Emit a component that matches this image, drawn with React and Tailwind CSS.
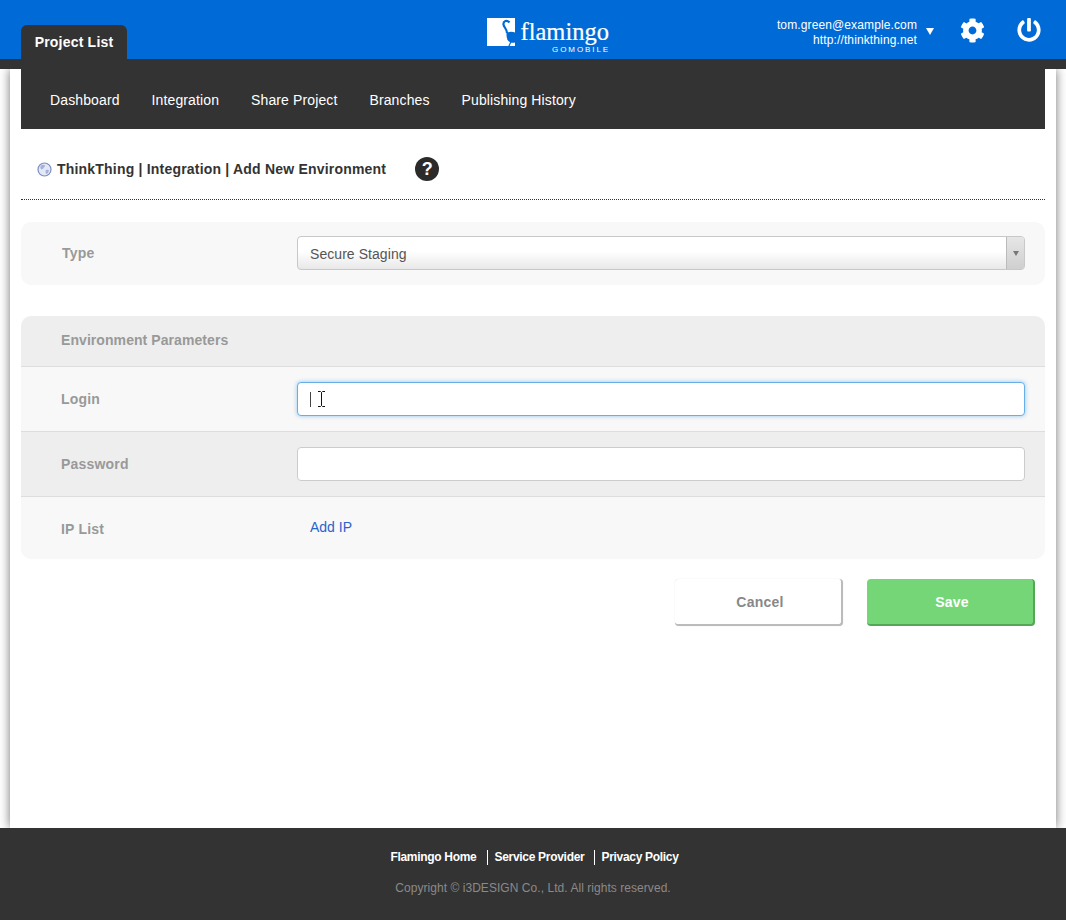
import React from "react";
import { FaCog, FaPowerOff } from "react-icons/fa";

const nav = ["Dashboard", "Integration", "Share Project", "Branches", "Publishing History"];

function Logo() {
  return (
    <div className="flex items-start h-[36px] mt-[18px] w-[122px] shrink-0 relative">
      <svg width="29" height="29" viewBox="0 0 29 29" className="shrink-0">
        <rect width="28" height="28" fill="#fff" />
        <path d="M22.500 4.500C20 1.500 16 3 16.500 6.500c.4 2.800 3.500 4.500 3.500 8.500" fill="none" stroke="#006bd6" strokeWidth="2.200" />
        <path d="M19.500 15c3-2 6.500-1.500 9.500 0v9c-3 1.500-6 1-8-1.500-1.300-2-1.600-5-1.500-7.500z" fill="#006bd6" />
        <path d="M24 23.500L21.500 29" fill="none" stroke="#006bd6" strokeWidth="1.200" />
      </svg>
      <div className="ml-[5px] w-[88px] flex flex-col items-end">
        <span className="font-[Liberation_Serif,serif] text-[24.5px] leading-[20px] text-white mt-[4px] [-webkit-text-stroke:0.2px_white]">flamingo</span>
        <span className="text-[8px] leading-[8px] tracking-[1.9px] text-white mt-[4px] mr-[-1px] whitespace-nowrap">GOMOBILE</span>
      </div>
    </div>
  );
}

function Globe() {
  return (
    <svg width="15" height="15" viewBox="0 0 15 15" className="shrink-0">
      <circle cx="7.500" cy="7.500" r="6.500" fill="#e3e8f6" stroke="#7d8dc0" strokeWidth="1.200" />
      <path d="M4 3.500c1.500-1 3-1 4 0 .5 1-1 1.500-1.500 2.500-.5 1.200-1.500 1.500-2.500 1-.8-1-.8-2.500 0-3.500zM9 8c1-.5 2.500-.3 3 .5-.3 1.500-1.200 3-2.500 3.500-1-.8-1.300-2.800-.5-4z" fill="#a3b1dc" />
    </svg>
  );
}

function Label({ children, className = "" }) {
  return <div className={`w-[276px] pl-[40px] shrink-0 text-[14px] font-bold text-[#999] tracking-[0.2px] ${className}`}>{children}</div>;
}

export default function App() {
  return (
    <div className="min-h-[920px] flex flex-col bg-white font-[Liberation_Sans,Arial,sans-serif]">
      <header className="relative z-10 h-[59px] bg-[#006bd6] flex pl-[21px] pr-[25px]">
        <div className="w-[466px] shrink-0 flex items-end">
          <div className="w-[106px] h-[34px] bg-[#333] rounded-t-[6px] text-white text-[14px] font-bold tracking-[0.2px] flex items-center justify-center">Project List</div>
        </div>
        <Logo />
        <div className="flex-1 flex justify-end items-start">
          <div className="mt-[18px] text-right text-white text-[12px] leading-[15px] tracking-[0.12px]">
            <div>tom.green@example.com</div>
            <div>http://thinkthing.net</div>
          </div>
          <div className="ml-[9px] mt-[28px] w-0 h-0 border-x-[4px] border-x-transparent border-t-[7px] border-t-white" />
          <FaCog className="ml-[26px] mt-[18px] text-white" size={25} />
          <FaPowerOff className="ml-[32px] mt-[18px] text-white" size={24} />
        </div>
      </header>
      <div className="relative z-10 h-[10px] bg-[#333]" />

      <div className="flex-1 flex bg-white">
        <main className="mx-[10px] flex-1 h-[759px] px-[11px] bg-white flex flex-col shadow-[0_0_10px_rgba(0,0,0,0.55)]">
          <nav className="h-[60px] shrink-0 bg-[#333] flex items-center pl-[29px] pt-[2px] gap-[32px] text-[14px] tracking-[0.12px] text-white">
            {nav.map((n) => <span key={n}>{n}</span>)}
          </nav>

          <div className="h-[71px] shrink-0 border-b border-dotted border-[#333] flex items-center pl-[16px] pt-[10px]">
            <Globe />
            <span className="ml-[5px] text-[14px] font-bold text-[#333] tracking-[0.2px]">ThinkThing | Integration | Add New Environment</span>
            <span className="ml-[29px] w-[24px] h-[24px] rounded-full bg-[#2b2b2b] text-white text-[18px] font-bold flex items-center justify-center">?</span>
          </div>

          <section className="mt-[22px] h-[63px] shrink-0 bg-[#f8f8f8] rounded-[10px] flex items-center pr-[20px] pb-[1px]">
            <Label className="!pl-[41px]">Type</Label>
            <div className="flex-1 h-[34px] border border-[#c8c8c8] rounded-[4px] flex overflow-hidden bg-[linear-gradient(to_bottom,#ffffff_45%,#e8e8e8_100%)]">
              <span className="flex-1 pl-[12px] text-[14px] tracking-[0.06px] leading-[35px] text-[#555]">Secure Staging</span>
              <span className="w-[18px] border-l border-[#bbb] flex items-center justify-center bg-[linear-gradient(to_bottom,#e6e6e6,#cfcfcf)]">
                <span className="w-0 h-0 border-x-[3px] border-x-transparent border-t-[5px] border-t-[#777]" />
              </span>
            </div>
          </section>

          <section className="mt-[31px] shrink-0 rounded-[10px] overflow-hidden flex flex-col">
            <div className="h-[50px] bg-[#eeeeee] flex items-center border-b border-[#ddd] box-content">
              <Label className="!tracking-[0.07px] pb-[2px]">Environment Parameters</Label>
            </div>
            <div className="h-[65px] bg-[#f8f8f8] border-b border-[#ddd] flex items-center pr-[20px]">
              <Label>Login</Label>
              <div className="relative flex-1 h-[34px] bg-white border border-[#66afe9] rounded-[4px] shadow-[0_0_4px_rgba(102,175,233,0.7)] flex items-center pl-[12px]">
                <span className="w-px h-[15px] bg-[#444]" />
                <svg width="7" height="16" viewBox="0 0 7 16" className="absolute left-[20px] top-[8px]">
                  <path d="M0 .5h2.500l1 1 1-1H7M3.500 1.500v13M0 15.500h2.500l1-1 1 1H7" fill="none" stroke="#111" strokeWidth="1" />
                </svg>
              </div>
            </div>
            <div className="h-[65px] bg-[#eeeeee] border-b border-[#ddd] flex items-center pr-[20px]">
              <Label>Password</Label>
              <div className="flex-1 h-[34px] bg-white border border-[#ccc] rounded-[4px]" />
            </div>
            <div className="h-[62px] bg-[#f8f8f8] flex items-start">
              <Label className="mt-[22px]">IP List</Label>
              <span className="mt-[20px] pl-[13px] text-[14px] text-[#2a62cc]">Add IP</span>
            </div>
          </section>

          <div className="mt-[20px] flex justify-end gap-[24px] pr-[10px]">
            <button className="w-[168px] h-[47px] bg-white rounded-[4px] border-r-2 border-b-2 border-[#bbb] shadow-[0_0_1px_rgba(0,0,0,0.2)] pl-[4px] pt-[2px] text-[14px] font-bold text-[#888] tracking-[0.25px]">Cancel</button>
            <button className="w-[168px] h-[47px] bg-[#75d677] rounded-[4px] border-r-2 border-b-2 border-[#55a758] pl-[4px] pt-[2px] text-[14px] font-bold text-white tracking-[0.25px]">Save</button>
          </div>
        </main>
      </div>

      <footer className="relative z-10 h-[92px] shrink-0 bg-[#333] flex flex-col items-center">
        <div className="mt-[22px] pl-[3px] flex items-center text-[12px] leading-[15px] font-bold tracking-[-0.3px] text-white">
          <span>Flamingo Home</span>
          <span className="ml-[11px] pl-[6px] border-l border-white">Service Provider</span>
          <span className="ml-[10px] pl-[6px] border-l border-white">Privacy Policy</span>
        </div>
        <div className="mt-[16px] text-[12px] leading-[15px] tracking-[0.05px] text-[#8a8a8a]">Copyright © i3DESIGN Co., Ltd. All rights reserved.</div>
      </footer>
    </div>
  );
}
